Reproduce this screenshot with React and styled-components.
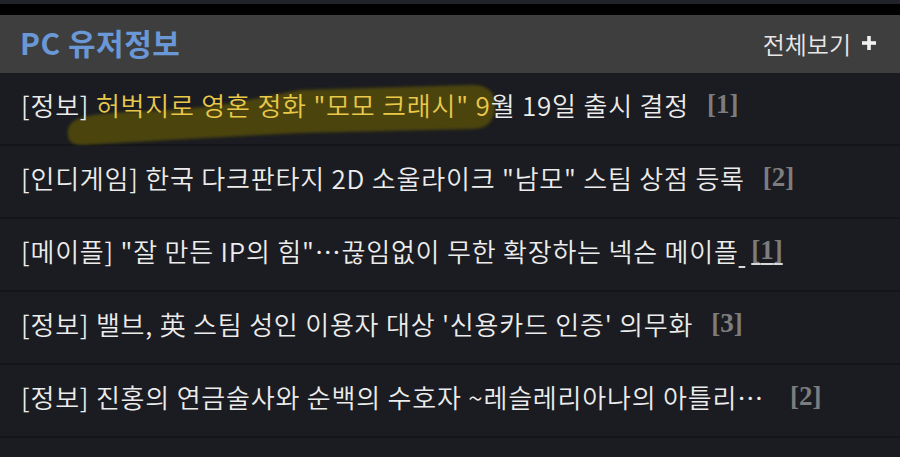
import React from "react";
import styled, { createGlobalStyle } from "styled-components";

const GlobalStyle = createGlobalStyle`
  html, body {
    margin: 0;
    padding: 0;
    background: #1b1c21;
  }
  body {
    font-family: "Noto Sans CJK KR", "Noto Sans", sans-serif;
  }
`;

const posts = [
  { tag: "정보", title: "허벅지로 영혼 정화 \"모모 크래시\" 9월 19일 출시 결정", count: 1, marked: true },
  { tag: "인디게임", title: "한국 다크판타지 2D 소울라이크 \"남모\" 스팀 상점 등록", count: 2 },
  { tag: "메이플", title: "\"잘 만든 IP의 힘\"…끊임없이 무한 확장하는 넥슨 메이플", count: 1, visited: true },
  { tag: "정보", title: "밸브, 英 스팀 성인 이용자 대상 '신용카드 인증' 의무화", count: 3 },
  { tag: "정보", title: "진홍의 연금술사와 순백의 수호자 ~레슬레리아나의 아틀리…", count: 2, wide: true },
];

function Highlight() {
  return (
    <Marker viewBox="0 0 900 73" width="900" height="73">
      <defs>
        <filter id="soft" x="-5%" y="-20%" width="110%" height="140%">
          <feGaussianBlur stdDeviation="1.6" />
        </filter>
      </defs>
      <path
        d="M68,58 C69,44 88,40 150,38 C220,35 262,24 300,17 L470,12 C488,11 497,20 495,36 C493,51 485,56 470,56 L300,60 C220,64 150,68 82,72 C71,72 67,67 68,58 Z"
        fill="#4c4411"
        filter="url(#soft)"
      />
    </Marker>
  );
}

function splitMarked(title) {
  const cut = title.indexOf("9") + 1;
  return [title.slice(0, cut), title.slice(cut)];
}

function Row({ post }) {
  const [head, tail] = splitMarked(post.title);
  return (
    <Item>
      {post.marked && <Highlight />}
      <Line>
        [{post.tag}]{" "}
        {post.marked ? (
          <>
            <Yellow>{head}</Yellow>
            {tail}
          </>
        ) : (
          post.title
        )}
        {post.visited && <Trail>{"\u00a0"}</Trail>}
      </Line>
      <Count $wide={post.wide} $visited={post.visited}>
        [{post.count}]
      </Count>
    </Item>
  );
}

export default function App() {
  return (
    <>
      <GlobalStyle />
      <Page>
        <TopStrip />
        <Band />
        <Header>
          <Title>PC 유저정보</Title>
          <More>
            전체보기
            <svg width="14" height="14" viewBox="0 0 14 14">
              <rect x="5.2" y="0" width="3.6" height="14" fill="#f0f0f0" />
              <rect x="0" y="5.2" width="14" height="3.6" fill="#f0f0f0" />
            </svg>
          </More>
        </Header>
        <List>
          {posts.map((post, i) => (
            <Row key={i} post={post} />
          ))}
        </List>
      </Page>
    </>
  );
}

const Page = styled.div`
  width: 900px;
  height: 457px;
  overflow: hidden;
  background: #1b1c21;
`;

const TopStrip = styled.div`
  height: 4px;
  background: #20232a;
`;

const Band = styled.div`
  height: 11px;
  background: #000;
`;

const Header = styled.header`
  height: 58px;
  background: #3e3e3e;
  display: flex;
  align-items: center;
  justify-content: space-between;
  padding: 0 24px 0 20px;
`;

const Title = styled.h2`
  margin: 0;
  font-size: 30px;
  font-weight: 700;
  color: #6a97d5;
  letter-spacing: 0.5px;
  padding-bottom: 4px;
`;

const More = styled.div`
  display: flex;
  align-items: center;
  gap: 11px;
  font-size: 24px;
  font-weight: 350;
  color: #e8e8e8;
  padding-bottom: 2px;
`;

const List = styled.ul`
  margin: 0;
  padding: 0;
  list-style: none;
`;

const Item = styled.li`
  position: relative;
  box-sizing: border-box;
  height: 73px;
  border-bottom: 2px solid #141519;
  display: flex;
  align-items: center;
  padding: 0 0 8px 21px;
  font-size: 26px;
  font-weight: 350;
  color: #ececec;
  white-space: nowrap;
`;

const Marker = styled.svg`
  position: absolute;
  left: 0;
  top: 0;
  z-index: 0;
`;

const Line = styled.span`
  position: relative;
  z-index: 1;
  letter-spacing: 0.8px;
`;

const Yellow = styled.span`
  color: #e9c84a;
`;

const Trail = styled.span`
  text-decoration: underline;
  text-decoration-color: #d8d8d8;
  text-underline-offset: 4px;
`;

const Count = styled.span`
  position: relative;
  z-index: 1;
  margin-left: ${(p) => (p.$wide ? "26px" : p.$visited ? "6px" : "18px")};
  font-family: "Liberation Serif", serif;
  font-weight: 700;
  font-size: 27px;
  color: #7d7d7d;
  text-decoration: ${(p) => (p.$visited ? "underline" : "none")};
  text-decoration-color: #d8d8d8;
  text-underline-offset: 4px;
`;
